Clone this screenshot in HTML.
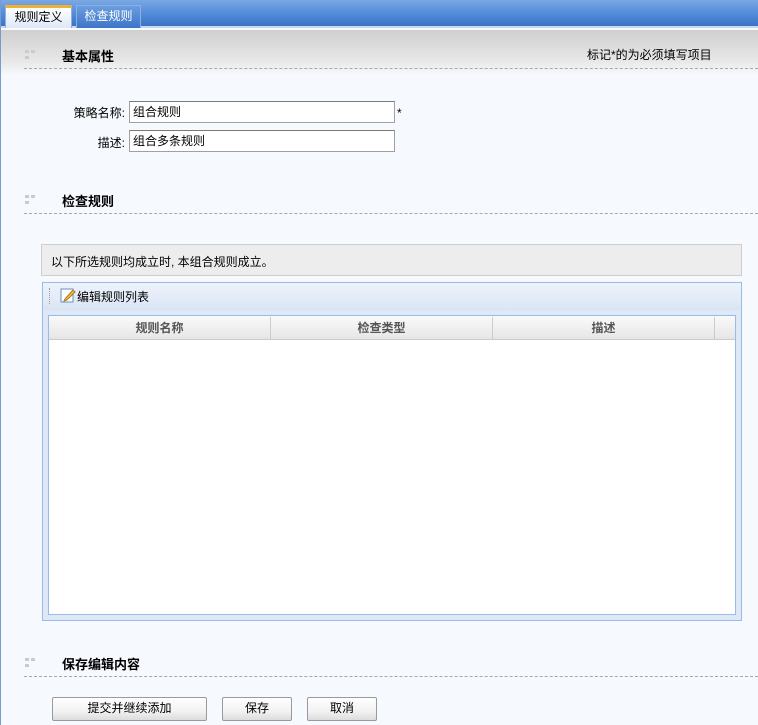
<!DOCTYPE html>
<html><head><meta charset="utf-8"><style>
*{margin:0;padding:0;box-sizing:border-box}
body{width:758px;height:725px;overflow:hidden;background:#f6f9fd;font:12px "Liberation Sans","Noto Sans CJK SC",sans-serif;color:#000;position:relative}
.a{position:absolute}
.top{left:0;top:0;width:758px;height:28px;background:linear-gradient(#7aa8e4,#5b92dc 40%,#3a73c8);border-bottom:2px solid #c8d8ee}
.tab{top:5px;height:23px;border:1px solid #8fb0dc;border-bottom:none;line-height:20px;text-align:center;font-size:12px}
.band{left:0;top:30px;width:758px;height:45px;background:linear-gradient(#cfcfcf,#e8e8e8 70%,#f6f9fd)}
.h{font-weight:bold;font-size:13px;left:62px}
.dots{left:25px;width:10px;height:10px}
.dots i{position:absolute;width:4px;height:3px;background:#c8ccd2}
.dash{left:24px;width:734px;border-top:1px dashed #a8a8a8;height:0}
.lbl{text-align:right;width:90px;left:35px}
.inp{left:129px;width:266px;height:22px;border:1px solid #a0a0a0;border-top-color:#7a7a7a;background:#fff;padding:2px 3px;line-height:16px}
.btn{top:697px;height:24px;border:1px solid #9a9a9a;border-radius:2px;background:linear-gradient(#fff,#f2f2f2 60%,#dcdcdc);text-align:center;line-height:21px}
.th{top:317px;height:23px;line-height:22px;text-align:center;font-weight:bold;color:#555;border-right:1px solid #ccc}
</style></head><body>
<div class="a" style="left:0;top:0;width:1px;height:725px;background:#7a9ccc;z-index:5"></div>
<div class="a top"></div>
<div class="a tab" style="left:5px;width:67px;background:linear-gradient(#fff,#dde8f6);border-top:3px solid #f0b030;line-height:18px">规则定义</div>
<div class="a tab" style="left:76px;width:65px;background:linear-gradient(#6a9de0,#3d75c8);color:#fff">检查规则</div>
<div class="a band"></div>

<div class="a dots" style="top:50px"><i style="left:0;top:0"></i><i style="left:6px;top:0"></i><i style="left:0;top:6px"></i></div>
<div class="a h" style="top:46px">基本属性</div>
<div class="a" style="left:587px;top:46px">标记*的为必须填写项目</div>
<div class="a dash" style="top:68px"></div>

<div class="a lbl" style="top:104px">策略名称:</div>
<div class="a inp" style="top:101px">组合规则</div>
<div class="a" style="left:397px;top:106px">*</div>
<div class="a lbl" style="top:134px">描述:</div>
<div class="a inp" style="top:130px">组合多条规则</div>

<div class="a dots" style="top:195px"><i style="left:0;top:0"></i><i style="left:6px;top:0"></i><i style="left:0;top:6px"></i></div>
<div class="a h" style="top:191px">检查规则</div>
<div class="a dash" style="top:213px"></div>

<div class="a" style="left:41px;top:244px;width:701px;height:32px;background:#ededed;border:1px solid #cfcfcf;padding:8px 9px">以下所选规则均成立时, 本组合规则成立。</div>

<div class="a" style="left:42px;top:282px;width:700px;height:339px;border:1px solid #99bbe8;background:#dfe8f6"></div>
<div class="a" style="left:43px;top:283px;width:698px;height:27px;background:linear-gradient(#eef3fb,#dae5f4)"></div>
<div class="a" style="left:49px;top:288px;width:2px;height:16px;border-left:1px dotted #999"></div>
<svg class="a" style="left:60px;top:287px" width="16" height="16"><rect x="1" y="2" width="12" height="13" fill="#fff" stroke="#6a8fc0"/><path d="M5 12 L13 3 L15 5 L7 13 L4 14 Z" fill="#f0c040" stroke="#b07820"/></svg>
<div class="a" style="left:77px;top:288px">编辑规则列表</div>
<div class="a" style="left:48px;top:315px;width:688px;height:300px;border:1px solid #99bbe8;background:#fff"></div>
<div class="a" style="left:49px;top:316px;width:686px;height:24px;background:linear-gradient(#fafafa,#e6e6e6);border-bottom:1px solid #ccc"></div>
<div class="a th" style="left:49px;width:222px">规则名称</div>
<div class="a th" style="left:271px;width:222px">检查类型</div>
<div class="a th" style="left:493px;width:222px">描述</div>

<div class="a dots" style="top:658px"><i style="left:0;top:0"></i><i style="left:6px;top:0"></i><i style="left:0;top:6px"></i></div>
<div class="a h" style="top:654px">保存编辑内容</div>
<div class="a dash" style="top:676px"></div>

<div class="a btn" style="left:52px;width:155px">提交并继续添加</div>
<div class="a btn" style="left:222px;width:70px">保存</div>
<div class="a btn" style="left:307px;width:70px">取消</div>
</body></html>
